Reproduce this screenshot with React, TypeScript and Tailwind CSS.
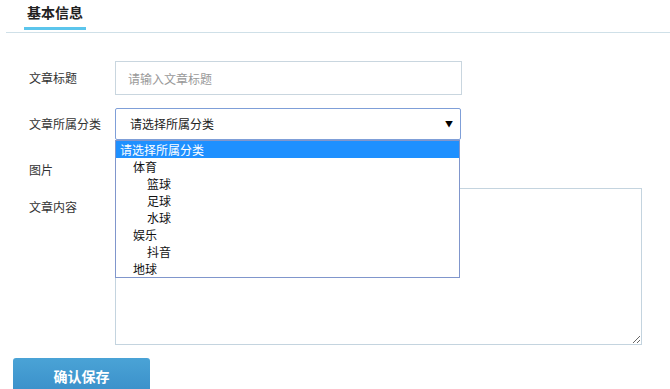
import React from "react";

const options = [
  { label: "请选择所属分类", depth: 0, active: true },
  { label: "体育", depth: 1 },
  { label: "篮球", depth: 2 },
  { label: "足球", depth: 2 },
  { label: "水球", depth: 2 },
  { label: "娱乐", depth: 1 },
  { label: "抖音", depth: 2 },
  { label: "地球", depth: 1 },
];

const App: React.FC = () => {
  return (
    <div className="w-[670px] h-[389px] overflow-hidden bg-white text-[#333] font-['Microsoft_YaHei','Noto_Sans_CJK_SC',sans-serif]">
      {/* Tab header */}
      <div className="ml-[6px] h-[33px] border-b border-[#cfe0e8] flex">
        <div className="ml-[18px] w-[62px] h-[30px] border-b-[3px] border-[#5bc5ec] flex justify-center">
          <span className="text-[14px] font-bold leading-[24px] text-[#222]">基本信息</span>
        </div>
      </div>

      {/* Form */}
      <div className="pl-[29px] pt-[28px]">
        <div className="flex items-center h-[34px]">
          <label className="w-[86px] text-[12px]">文章标题</label>
          <input
            className="w-[347px] h-[34px] border border-[#c9d6df] px-[12px] text-[12px] outline-none placeholder:text-[#999]"
            placeholder="请输入文章标题"
          />
        </div>

        <div className="flex items-center h-[32px] mt-[13px]">
          <label className="w-[86px] text-[12px]">文章所属分类</label>
          <div className="relative w-[346px] h-[32px]">
            <div className="h-full border border-[#7f9fd8] rounded-[2px] flex items-center justify-between pl-[14px] pr-[7px] text-[12px] text-[#222]">
              <span>请选择所属分类</span>
              <span className="text-[8px] text-black">▼</span>
            </div>
            <div className="absolute left-0 top-[32px] w-[345px] h-[138px] border border-[#8096cc] bg-white z-10 text-[12px] leading-[17px]">
              {options.map((o) => (
                <div
                  key={o.label}
                  className={
                    o.active
                      ? "bg-[#1e90ff] text-white pl-[4px] h-[17px]"
                      : o.depth === 1
                      ? "pl-[17px] h-[17px] text-[#111]"
                      : "pl-[31px] h-[17px] text-[#111]"
                  }
                >
                  {o.label}
                </div>
              ))}
            </div>
          </div>
        </div>

        <div className="flex items-center h-[20px] mt-[20px]">
          <label className="w-[86px] text-[12px]">图片</label>
        </div>

        <div className="flex items-start mt-[8px]">
          <label className="w-[86px] text-[12px] leading-[18px] mt-[10px]">文章内容</label>
          <textarea className="w-[527px] h-[157px] border border-[#c4d4df] outline-none resize block" />
        </div>

        <div className="-ml-[16px] mt-[13px]">
          <button className="w-[137px] h-[36px] rounded-[3px] bg-gradient-to-b from-[#4aa3d6] to-[#3a8fc9] text-white text-[14px] font-bold">
            确认保存
          </button>
        </div>
      </div>
    </div>
  );
};

export default App;
